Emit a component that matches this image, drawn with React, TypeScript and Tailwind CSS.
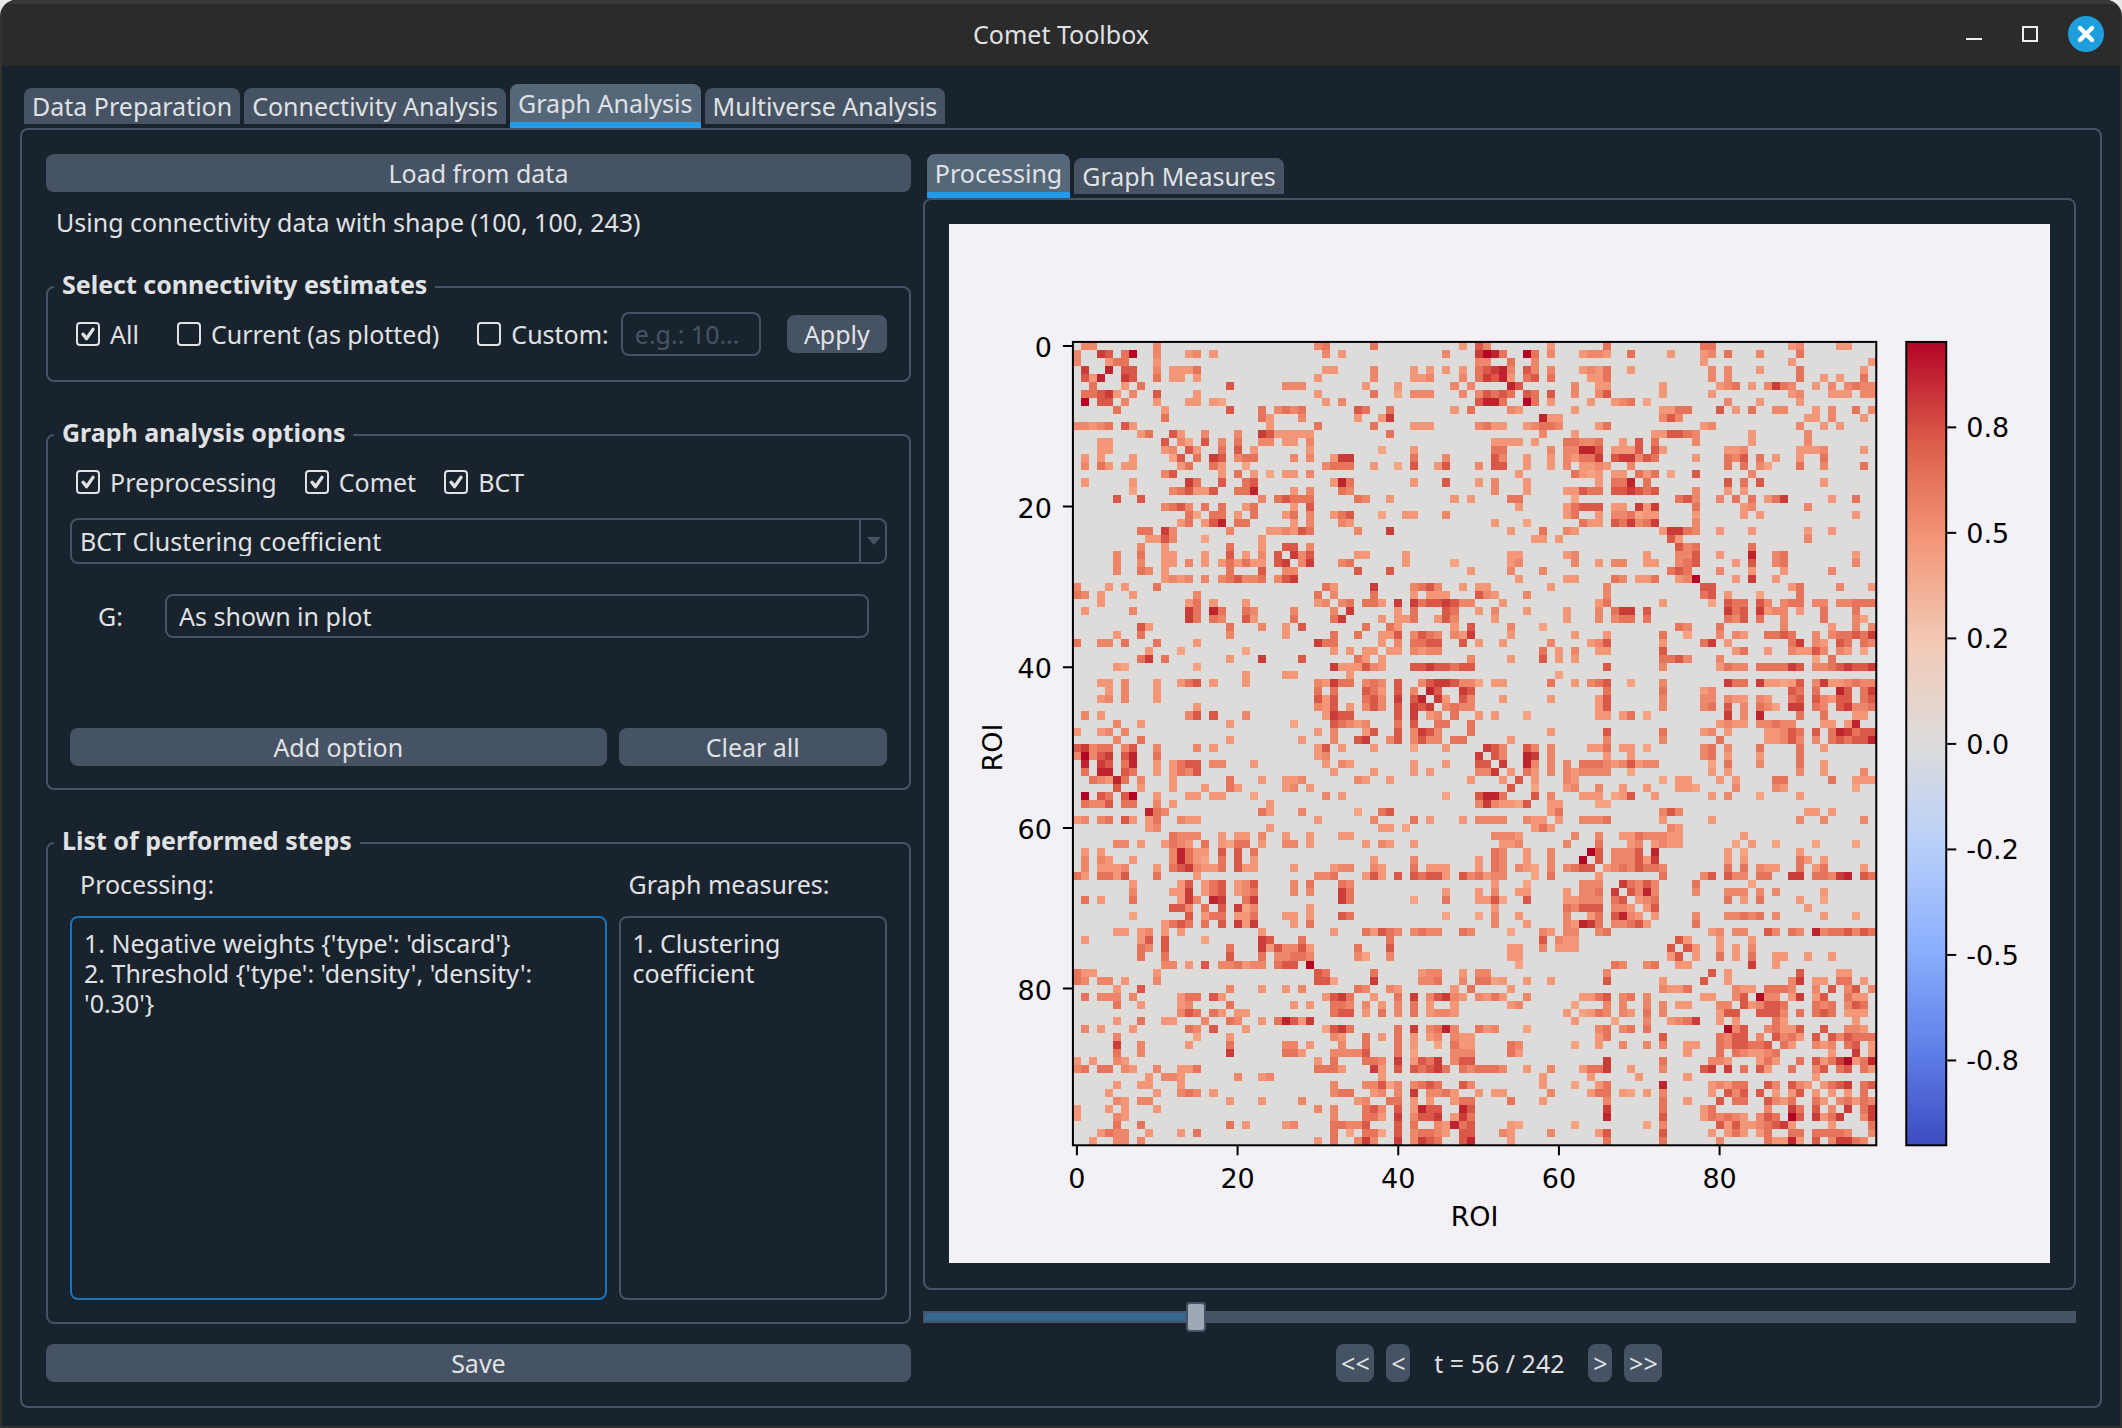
import { useState } from "react";
import { clsx } from "clsx";

const MAIN_TABS = ["Data Preparation", "Connectivity Analysis", "Graph Analysis", "Multiverse Analysis"];
const PLOT_TABS = ["Processing", "Graph Measures"];

const PROCESSING_STEPS = "1. Negative weights {'type': 'discard'}\n2. Threshold {'type': 'density', 'density': '0.30'}";
const MEASURE_STEPS = "1. Clustering coefficient";

const LAST_T = 242;

/* Upper triangle of the thresholded 100x100 matrix, one string per row.
   Each entry is "firstColumn:levels", one level digit per neighbouring cell. */
const MATRIX_ROWS: string[] = [
  "1:33 10:3 30:34 37:4 48:2 50:53 59:2 66:4 78:44 89:23 95:22",
  "3:65 6:48 10:3 14:23 17:2 31:3 33:2 46:3 50:6874 56:84 59:3 63:2332 69:4 74:2 78:23 81:4 85:3 90:4",
  "4:2 5:44 10:2 50:33 54:4 57:3 78:2 89:2 99:2",
  "4:7 6:55 10:3 12:2224 31:22 37:3 42:2 44:2 46:2 48:2 50:45673 56:53 59:3 63:2324 69:2 79:3 81:3 85:2 90:4 98:2",
  "6:65 10:4 12:22 15:2 30:2 37:3 42:223 48:3 50:46572 56:45 59:4 64:224 79:3 81:3 90:4 93:2 95:2 98:4",
  "6:2 8:4 19:5 26:333 36:2 40:2 47:3 49:3 54:75 62:3 65:22 73:2 80:234 84:2 86:3643 92:2 94:3 96:3433",
  "7:3 10:5 15:2 30:2 37:4 40:1 42:333 48:3 50:35454 56:54 59:5 62:3 65:35 73:2 79:2 89:23 94:222 98:33",
  "10:2 14:22 17:21 31:2 33:3 50:5774 56:84 59:2 64:2 67:234 71:1 81:3 85:2 90:2",
  "11:2 19:5 23:4 25:3434 35:54 39:4 47:2 49:4 54:32 62:2 73:2244 80:5 82:2 84:4 87:33 92:2 94:3 97:4 99:3",
  "11:4 23:42 28:3 35:2 38:26 58:722 73:353 91:22 94:3 98:2",
  "24:2 30:4 37:4 42:222 50:3422 56:23443 65:24 78:23 90:3 93:2 95:2",
  "12:52 16:3 20:3 23:6522222 39:4 58:3 62:2 72:225543 84:2 91:3",
  "13:31 16:5 18:3 20:4 23:33 26:22 29:3 52:2222 57:2 61:44334 68:2 70:5 72:4 77:3 84:2 91:3",
  "14:52 18:4 20:5 22:2 29:2 38:1 42:2 52:44 59:3 61:33775 67:2225 72:52 81:223 90:2223 98:2",
  "15:4 17:65 20:344 27:3 29:3 32:266 42:4 46:3 52:53 56:2 59:2 61:32446 67:566354 77:2 81:435 85:4 87:2 90:2 93:4",
  "17:42 21:1 31:3444 37:2 40:1 42:5 45:25 50:3 52:55 56:2 59:2 61:3 63:2232 69:3 81:4 83:4 85:31 90:4 93:3 98:4",
  "18:2 20:4 22:2 24:1 26:22 29:3 55:2 62:4212 67:22 70:424 74:1 77:5 84:3",
  "18:5 21:45 32:274 42:2 46:5 50:2 52:3 56:2 65:2 67:447 71:4 81:5 83:4 85:5 93:2",
  "20:447 27:2 29:3 33:43 52:3 56:2 61:22544 67:556545 77:3 81:2 83:2",
  "23:3 25:45444 35:43 39:2 47:2 49:2 54:44 62:1 75:453 80:3 82:4 84:4 86:246 94:2 97:4",
  "21:24 27:2 29:5 55:2 61:24555 67:22 70:626 77:4 83:23 91:3",
  "22:4 26:24 29:3 32:245 38:1 41:22 46:3 61:24 65:2 67:334122 77:2 83:2 85:2 97:2",
  "27:2 29:3 33:32 52:2 56:1 63:422 67:546346 77:3",
  "24:223254 35:3 39:6 54:2 58:4 61:32 73:26643 80:2 84:2 91:2 94:2",
  "57:22 60:2 74:52 91:3",
  "26:55 29:3 75:534 84:4",
  "27:635 35:22 41:2 54:22 61:23 71:2 75:335 80:2 84:7 87:34 97:2",
  "28:36 33:34 41:2 47:1 54:23 62:3 65:2 67:33 71:22 75:345 82:2 84:5 87:34 97:3",
  "35:5 39:5 49:2 54:3 58:3 74:454 80:3 84:2 88:2 94:3",
  "55:2 61:22 67:43 70:224 75:23 77:8 82:2 84:6 87:2",
  "31:42 37:6 42:3453 48:2 50:22 59:2 66:3 78:55 89:24 95:3 99:2",
  "32:3 37:4 42:2 44:222 50:532 56:3 66:3 78:45 81:2 85:1 90:4",
  "33:34 36:442 40:6 42:64556533 53:2 65:24 73:2 79:1 81:544 85:53 88:344 92:33 95:33444",
  "34:6 40:2 42:4 46:54 50:2 52:3 56:2 61:2 65:3 67:466 71:5 81:645 85:6233 90:2 93:4 97:4",
  "38:2 40:224 45:253 52:2 61:2 65:3 67:344 71:4 81:435 85:4 88:3 93:4 97:31",
  "36:4 39:42 47:2 49:5 54:3 58:1 75:43 80:4 88:3 94:2 97:3 99:3",
  "38:225 42:3543 47:326 54:2 62:2 66:2 73:4 76:1 80:3 82:32 86:4454 92:3 94:344546",
  "38:2 40:3 42:4455 48:5 50:2 53:2 59:3 64:235 73:2 78:46 81:2 89:46 92:32 95:54 98:43",
  "39:22 42:3233 58:4 60:2 62:3 65:22 73:5 82:24 86:2 89:32253 95:32 98:1",
  "49:3 54:2 58:5 60:2 62:2 73:4453 80:3 92:1 94:4",
  "42:55655455 66:5 73:3 80:2433 85:444465 92:33456556",
  "60:1",
  "43:3566533 50:1 52:22 59:4 62:2 64:345 69:1 73:3 81:644 85:622125 92:36223433",
  "44:75 48:65 66:4 73:4 78:23 89:54 92:4 95:75 98:46",
  "45:62 48:53 53:2 59:2 65:25 73:3 78:33 81:322 85:32 89:45 92:532 95:55 98:45",
  "46:3433 65:25 73:3 78:34 81:5 83:3 85:431 89:66 92:43 95:56334",
  "47:4 50:2 52:2 56:1 65:22 68:24 71:1 81:6 83:3 85:7 90:4 93:4 97:22",
  "49:4 80:2322 85:3343 89:3 93:22 96:27",
  "49:4 59:2 66:5 73:4 78:23 81:2 86:22354 92:5 94:476455",
  "54:2 66:3 73:3 80:4 86:22353 92:3 94:454557",
  "51:653 56:53 59:3 64:224 68:22 71:1 78:34 81:3 85:4 90:4 93:2",
  "52:53 56:76 59:3 66:2 69:2 78:34 81:2 85:2 90:4",
  "53:6 56:73 59:3 61:3 63:4443235233 79:1 81:4 85:3 90:4 93:2",
  "54:2 56:42 59:3 61:323333 69:1 79:2 81:2 90:3 93:2 98:3",
  "55:5 57:2 61:32 73:1 75:22 80:2 82:2 87:44 94:4 97:222",
  "57:1 61:23 65:3 68:2 71:2 75:221 82:3 87:32 97:1",
  "57:5 59:3 63:222 67:125 72:2 79:2 81:3 85:1 90:2",
  "59:22 65:11",
  "59:24 73:353 91:22 94:2",
  "60:2 63:3334 73:2 79:2 90:3 93:3 98:3",
  "74:32",
  "62:3 65:3 68:22433322 83:2",
  "65:4 69:23 72:2322 82:1 84:2 87:1 92:1 97:1",
  "64:85 67:3335 72:7 81:2 83:1 90:2",
  "65:5 67:333526 81:2 83:2 90:42 93:2",
  "66:23435443 81:4 83:4 85:322 90:4 92:24 98:2",
  "73:4 78:35 81:533 85:44 89:66 92:443 95:67 98:54",
  "68:64 70:353 77:4 84:1",
  "69:5373 77:3 81:333 85:3 87:3 93:2",
  "70:234 81:4 83:2 85:4 90:2 93:1",
  "71:25 91:2",
  "72:2 77:3 81:33434 87:3 93:2 97:1",
  "77:4",
  "79:23 82:33 86:53 89:43 92:73445354",
  "75:52 80:2 84:2",
  "76:52 80:2 82:2 84:3",
  "77:2 80:4 82:2 84:4 87:22 91:2 94:2",
  "84:6 87:2",
  "79:5 81:2 90:5 95:22",
  "81:2 89:36 92:22 95:44 98:2",
  "82:322 86:4443 92:3 94:5 96:35 99:3",
  "82:35 85:833 89:26 92:25 96:422",
  "83:523554 92:434 96:354",
  "85:5553 90:4 92:454 96:222",
  "87:42 97:2",
  "86:34225 93:5 96:332",
  "87:5342 92:5 94:535444",
  "88:42 92:323 96:45 99:2",
  "94:2 97:6 99:2",
  "90:4 92:52468247",
  "92:35 95:45 98:42",
  "92:2",
  "93:2456 98:45",
  "94:2 96:2 98:4",
  "95:34243",
  "96:6 98:46",
  "98:36",
  "99:4",
  "99:3",
];

const LEVEL_COLORS: Record<string, string> = {
  "1": "#f6a384",
  "2": "#f39778",
  "3": "#ee8669",
  "4": "#e6745b",
  "5": "#d95847",
  "6": "#c93c38",
  "7": "#be242e",
  "8": "#b40426",
};

// one path per level, mirrored on the diagonal
const LEVEL_PATHS = (() => {
  const paths: Record<string, string> = {};
  MATRIX_ROWS.forEach((line, row) => {
    line.split(" ").forEach((run) => {
      const [start, levels] = run.split(":");
      levels.split("").forEach((level, i) => {
        const col = Number(start) + i;
        paths[level] = `${paths[level] ?? ""}M${col} ${row}h1v1h-1zM${row} ${col}h1v1h-1z`;
      });
    });
  });
  return paths;
})();

const AXIS_TICKS = [0, 20, 40, 60, 80];

const BAR_TICKS = ["0.8", "0.5", "0.2", "0.0", "-0.2", "-0.5", "-0.8"];

const BAR_STOPS = ["#b40426", "#dc5d4a", "#f4987a", "#f2cab5", "#dddcdc", "#b8d0f9", "#8db0fe", "#6282ea", "#3b4cc0"];

const BUTTON = "h-[38px] rounded-lg bg-[#455364] text-center leading-[38px] hover:bg-[#54687a]";
const FIELD = "h-11 min-w-0 rounded-lg border-2 border-[#455364] bg-transparent px-3 outline-none";

function Tabs({ names, active, onSelect }: { names: string[]; active: string; onSelect: (name: string) => void }) {
  return (
    <div role="tablist" className="flex h-11 items-end gap-1 px-1">
      {names.map((name) => (
        <button
          key={name}
          role="tab"
          aria-selected={name === active}
          onClick={() => onSelect(name)}
          className={clsx(
            "rounded-t-lg px-2",
            name === active
              ? "h-11 border-b-[6px] border-[#259ae9] bg-[#54687a] leading-[38px]"
              : "mb-1 h-9 bg-[#455364] leading-9"
          )}
        >
          {name}
        </button>
      ))}
    </div>
  );
}

function Check({ label, checked, onChange }: { label: string; checked: boolean; onChange: (v: boolean) => void }) {
  return (
    <label className="flex items-center gap-[10px]">
      <span className="grid h-6 w-6">
        <input
          type="checkbox"
          checked={checked}
          onChange={(e) => onChange(e.target.checked)}
          className="col-start-1 row-start-1 h-6 w-6 appearance-none rounded border-2 border-[#dfe1e2]"
        />
        {checked && (
          <svg viewBox="0 0 24 24" className="pointer-events-none col-start-1 row-start-1 h-6 w-6">
            <path d="M7 12.2l3.6 4.4L17 7.4" fill="none" stroke="#dfe1e2" strokeWidth="3.4" strokeLinecap="round" strokeLinejoin="round" />
          </svg>
        )}
      </span>
      <span>{label}</span>
    </label>
  );
}

function Group({ title, className, children }: { title: string; className?: string; children: React.ReactNode }) {
  return (
    <fieldset className={clsx("min-w-0 rounded-lg border-2 border-[#455364] px-[22px]", className)}>
      <legend className="-ml-4 pr-2 pb-[6px] pl-2 leading-6 font-bold">{title}</legend>
      {children}
    </fieldset>
  );
}

function ConnectivityPlot() {
  return (
    <svg viewBox="0 0 1102 1040" className="block w-full bg-[#f3f1f6] font-['DejaVu_Sans',sans-serif]" fontSize="27" fill="#000">
      {/* heatmap */}
      <rect x="124" y="118" width="804" height="804" fill="#dddcdb" />
      <g transform="translate(124 118) scale(8.04)" shapeRendering="crispEdges">
        {Object.entries(LEVEL_PATHS).map(([level, d]) => (
          <path key={level} d={d} fill={LEVEL_COLORS[level]} />
        ))}
      </g>
      <rect x="124" y="118" width="804" height="804" fill="none" stroke="#000" strokeWidth="2" />
      {AXIS_TICKS.map((t) => {
        const pos = 4 + t * 8.04;
        return (
          <g key={t}>
            <path d={`M114 ${118 + pos}h10M${124 + pos} 922v10`} stroke="#000" strokeWidth="2" />
            <text x="103" y={129 + pos} textAnchor="end">{t}</text>
            <text x={124 + pos} y="965" textAnchor="middle">{t}</text>
          </g>
        );
      })}
      <text x="526" y="1003" textAnchor="middle">ROI</text>
      <text transform="translate(53 524) rotate(-90)" textAnchor="middle">ROI</text>

      {/* colour bar */}
      <defs>
        <linearGradient id="coolwarm" x1="0" y1="0" x2="0" y2="1">
          {BAR_STOPS.map((c, i) => (
            <stop key={c} offset={i / (BAR_STOPS.length - 1)} stopColor={c} />
          ))}
        </linearGradient>
      </defs>
      <rect x="958" y="118" width="40" height="804" fill="url(#coolwarm)" stroke="#000" strokeWidth="2" />
      {BAR_TICKS.map((label, i) => {
        const y = 203.5 + i * 105.6;
        return (
          <g key={label}>
            <path d={`M999 ${y}h9`} stroke="#000" strokeWidth="2" />
            <text x="1018" y={y + 10}>{label}</text>
          </g>
        );
      })}
    </svg>
  );
}

export default function App() {
  const [mainTab, setMainTab] = useState("Graph Analysis");
  const [plotTab, setPlotTab] = useState("Processing");
  const [scope, setScope] = useState("All");
  const [custom, setCustom] = useState("");
  const [filters, setFilters] = useState({ Preprocessing: true, Comet: true, BCT: true });
  const [t, setT] = useState(56);

  const step = (by: number) => setT(Math.max(0, Math.min(LAST_T, t + by)));

  return (
    <div className="min-h-screen bg-[#e9e9ea]">
      <div className="flex min-h-screen flex-col overflow-hidden rounded-t-2xl border-x-2 border-b-2 border-[#33322f] bg-[#19232d] font-['Noto_Sans',sans-serif] text-[25px] leading-[30px] text-[#e0e1e3]">
        {/* title bar */}
        <header className="grid h-[66px] grid-cols-[1fr_auto_1fr] items-center border-t-4 border-[#383838] bg-[#2b2b2b] px-4 pb-[2px]">
          <h1 className="col-start-2">Comet Toolbox</h1>
          <div className="flex items-center justify-end gap-5">
            <button aria-label="Minimize" className="h-9 w-9">
              <svg viewBox="0 0 36 36" className="h-9 w-9"><path d="M10 23h16" stroke="#eee" strokeWidth="2" /></svg>
            </button>
            <button aria-label="Maximize" className="h-9 w-9">
              <svg viewBox="0 0 36 36" className="h-9 w-9"><path d="M11 11h14v14H11z" fill="none" stroke="#eee" strokeWidth="2" /></svg>
            </button>
            <button aria-label="Close" className="h-9 w-9 rounded-full bg-[#1f9ede]">
              <svg viewBox="0 0 36 36" className="h-9 w-9"><path d="M12 12l12 12M24 12L12 24" stroke="#fff" strokeWidth="4.4" strokeLinecap="round" /></svg>
            </button>
          </div>
        </header>

        <main className="flex flex-1 flex-col px-[18px] pt-[18px] pb-[18px]">
          <Tabs names={MAIN_TABS} active={mainTab} onSelect={setMainTab} />

          <div className="grid flex-1 grid-cols-[minmax(0,3fr)_minmax(0,4fr)] gap-3 rounded-lg border-2 border-[#455364] p-6">
            {/* options */}
            <div className="flex flex-col">
              <button className={BUTTON}>Load from data</button>
              <p className="mt-3 mb-8 px-[10px] leading-9">Using connectivity data with shape (100, 100, 243)</p>

              <Group title="Select connectivity estimates" className="pb-6">
                <div className="flex items-center pt-[10px] pl-[6px]">
                  <div className="flex items-center gap-[38px] whitespace-nowrap">
                    <Check label="All" checked={scope === "All"} onChange={() => setScope("All")} />
                    <Check label="Current (as plotted)" checked={scope === "Current"} onChange={() => setScope("Current")} />
                    <Check label="Custom:" checked={scope === "Custom"} onChange={() => setScope("Custom")} />
                  </div>
                  <input
                    aria-label="Custom estimates"
                    placeholder="e.g.: 10…"
                    value={custom}
                    onChange={(e) => setCustom(e.target.value)}
                    className={clsx(FIELD, "ml-3 flex-1 placeholder:text-[#455364]")}
                  />
                  <button className={clsx(BUTTON, "ml-[26px] w-[100px]")}>Apply</button>
                </div>
              </Group>

              <Group title="Graph analysis options" className="mt-[38px] pb-[22px]">
                <div className="flex h-[54px] items-center gap-7 pt-[10px] pl-[6px]">
                  {(Object.keys(filters) as (keyof typeof filters)[]).map((name) => (
                    <Check
                      key={name}
                      label={name}
                      checked={filters[name]}
                      onChange={(v) => setFilters({ ...filters, [name]: v })}
                    />
                  ))}
                </div>
                <div className="mt-[14px] grid">
                  <select
                    aria-label="Graph option"
                    className="col-start-1 row-start-1 h-[46px] w-full appearance-none rounded-lg border-2 border-[#455364] bg-[#19232d] px-2 outline-none"
                  >
                    <option>BCT Clustering coefficient</option>
                  </select>
                  <span className="pointer-events-none col-start-1 row-start-1 flex h-[46px] w-7 items-center justify-center justify-self-end border-l-2 border-[#455364]">
                    <svg viewBox="0 0 14 8" className="h-2 w-[14px]"><path d="M0 0h14L7 8z" fill="#455364" /></svg>
                  </span>
                </div>
                <div className="mt-[30px] flex items-center pr-[18px] pl-7">
                  <label htmlFor="g-input" className="w-[67px]">G:</label>
                  <input id="g-input" defaultValue="As shown in plot" className={clsx(FIELD, "flex-1")} />
                </div>
                <div className="mt-[90px] grid grid-cols-[2fr_1fr] gap-3">
                  <button className={BUTTON}>Add option</button>
                  <button className={BUTTON}>Clear all</button>
                </div>
              </Group>

              <Group title="List of performed steps" className="mt-[38px] flex flex-1 flex-col pb-[22px]">
                <div className="grid flex-1 grid-cols-[2fr_1fr] grid-rows-[auto_1fr] gap-x-3 gap-y-[14px] pt-2">
                  <label htmlFor="processing" className="pl-[10px] leading-9">Processing:</label>
                  <label htmlFor="measures" className="pl-[10px] leading-9">Graph measures:</label>
                  <textarea
                    id="processing"
                    readOnly
                    value={PROCESSING_STEPS}
                    className="resize-none rounded-lg border-2 border-[#1a72bb] px-3 py-[10px] outline-none"
                  />
                  <textarea
                    id="measures"
                    readOnly
                    value={MEASURE_STEPS}
                    className="resize-none rounded-lg border-2 border-[#455364] px-3 py-[10px] outline-none"
                  />
                </div>
              </Group>

              <button className={clsx(BUTTON, "mt-5")}>Save</button>
            </div>

            {/* plot */}
            <div className="flex flex-col">
              <Tabs names={PLOT_TABS} active={plotTab} onSelect={setPlotTab} />
              <div className="flex-1 rounded-lg border-2 border-[#455364] p-6">
                <ConnectivityPlot />
              </div>
              <input
                type="range"
                aria-label="Time point"
                min={0}
                max={LAST_T}
                value={t}
                onChange={(e) => setT(Number(e.target.value))}
                style={{ "--fill": `${(t / LAST_T) * 100}%` } as React.CSSProperties}
                className="mt-3 h-[30px] w-full appearance-none bg-transparent [&::-webkit-slider-runnable-track]:h-3 [&::-webkit-slider-runnable-track]:border-2 [&::-webkit-slider-runnable-track]:border-[#455364] [&::-webkit-slider-runnable-track]:bg-[linear-gradient(to_right,#346792_var(--fill),#455364_var(--fill))] [&::-webkit-slider-thumb]:-mt-[11px] [&::-webkit-slider-thumb]:h-[30px] [&::-webkit-slider-thumb]:w-5 [&::-webkit-slider-thumb]:appearance-none [&::-webkit-slider-thumb]:rounded [&::-webkit-slider-thumb]:border-2 [&::-webkit-slider-thumb]:border-[#455364] [&::-webkit-slider-thumb]:bg-[#9da9b5]"
              />
              <div className="mt-3 flex justify-center gap-3">
                <button onClick={() => step(-10)} className={clsx(BUTTON, "w-[38px]")}>&lt;&lt;</button>
                <button onClick={() => step(-1)} className={clsx(BUTTON, "w-6")}>&lt;</button>
                <span className="w-[154px] text-center leading-[38px]">t = {t} / {LAST_T}</span>
                <button onClick={() => step(1)} className={clsx(BUTTON, "w-6")}>&gt;</button>
                <button onClick={() => step(10)} className={clsx(BUTTON, "w-[38px]")}>&gt;&gt;</button>
              </div>
            </div>
          </div>
        </main>
      </div>
    </div>
  );
}
